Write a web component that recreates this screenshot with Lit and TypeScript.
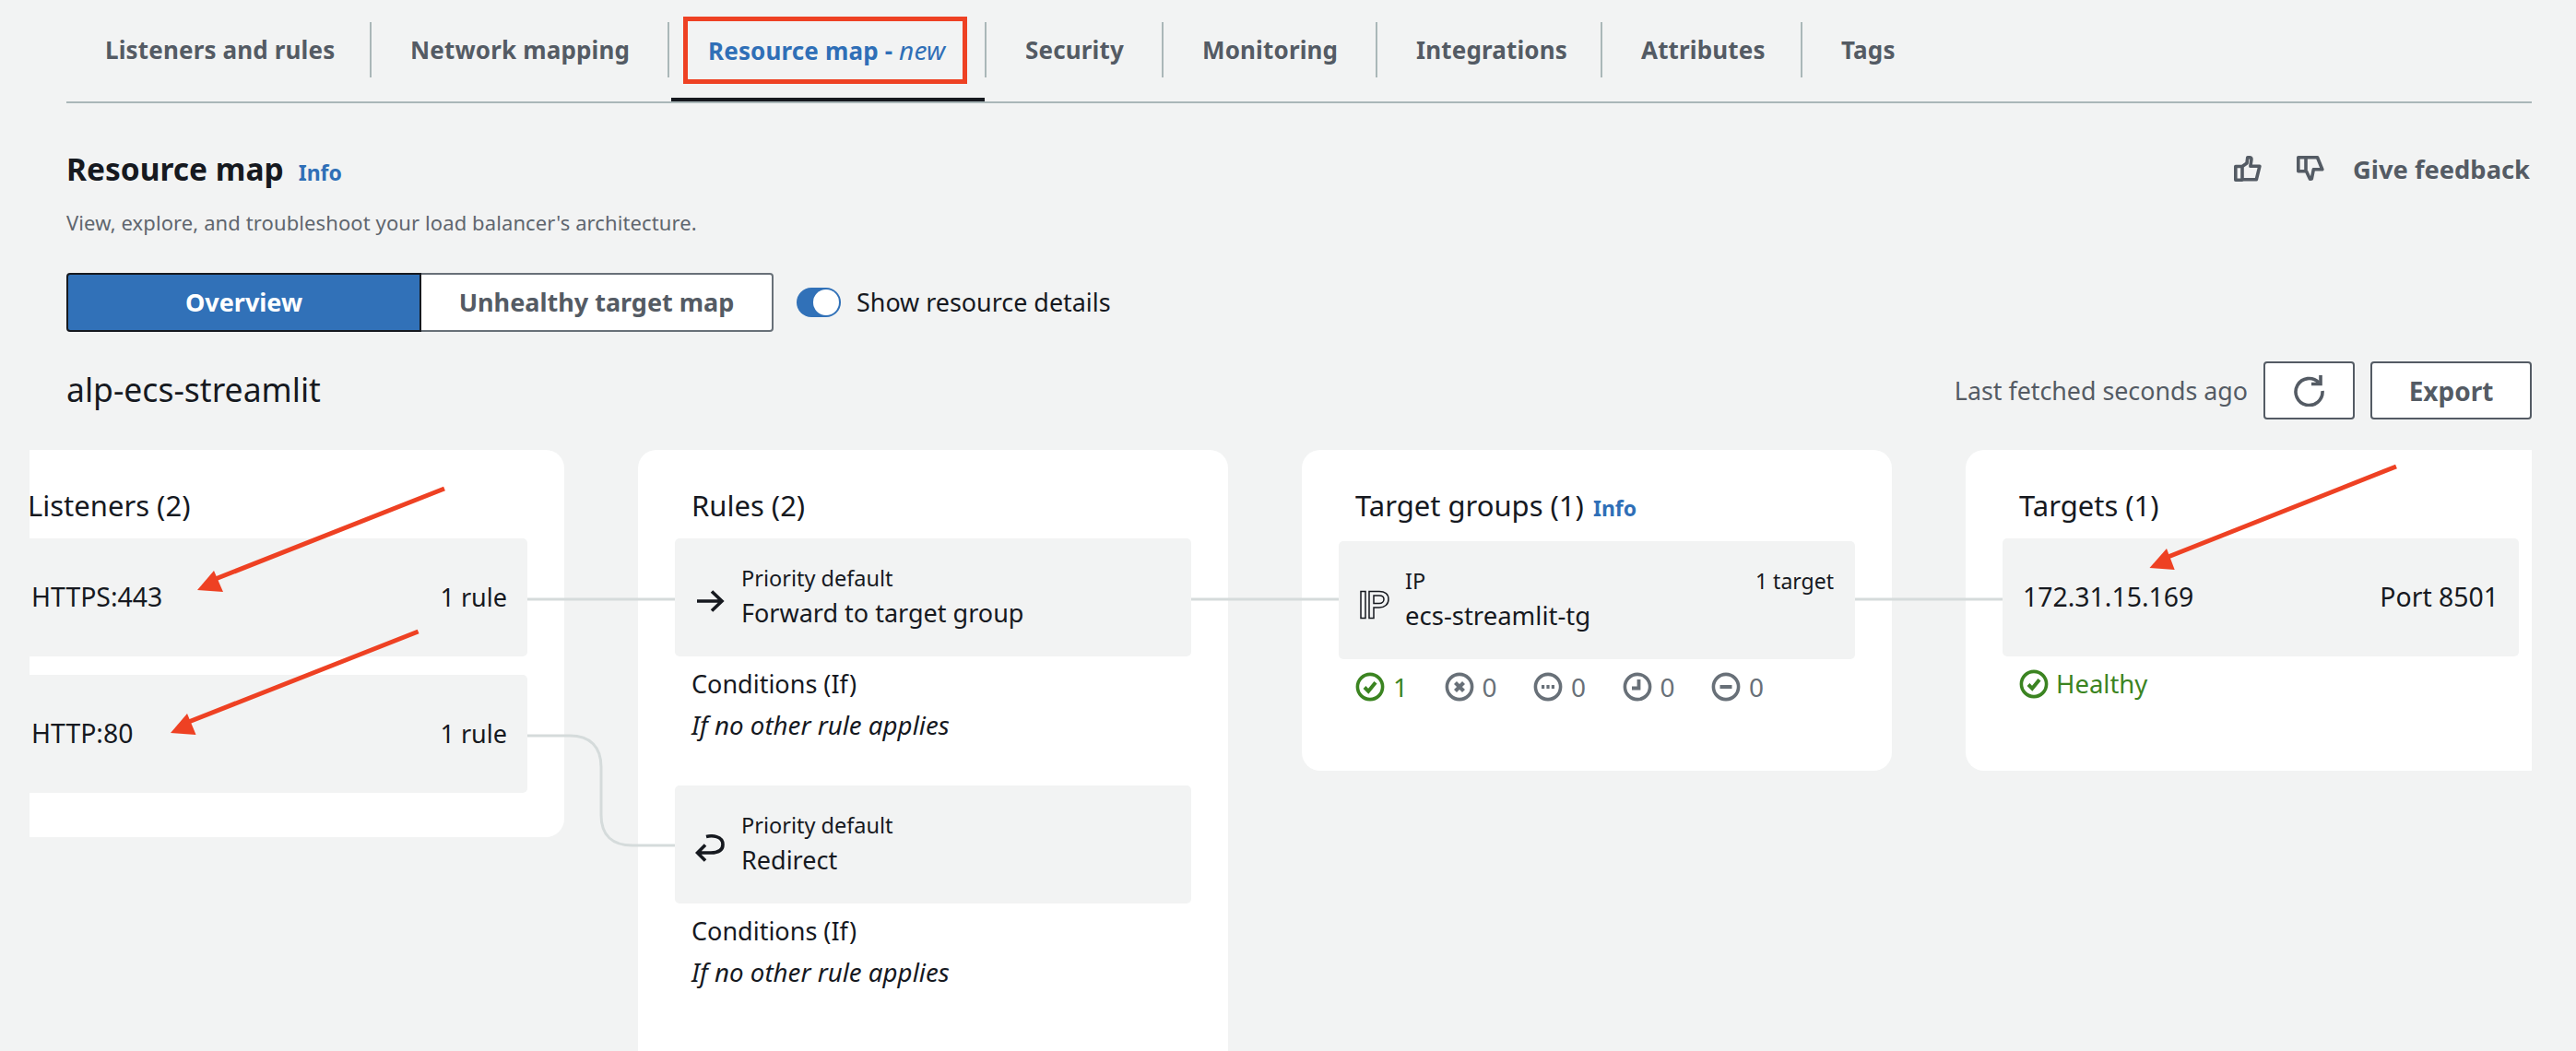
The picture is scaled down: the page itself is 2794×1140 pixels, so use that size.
import { LitElement, html, css, svg } from "lit";
import { customElement } from "lit/decorators.js";

const tabs: [string, number][] = [
  ["Listeners and rules", 329], ["Network mapping", 323], ["Resource map", 344], ["Security", 192],
  ["Monitoring", 232], ["Integrations", 244], ["Attributes", 217], ["Tags", 140],
];

const ring = svg`<circle cx="16" cy="16" r="13.6" fill="none" stroke="currentColor" stroke-width="3.6"/>`;
const ok = svg`${ring}<path d="M10 16.500l4.200 4.300 7.800-9.600" fill="none" stroke="currentColor" stroke-width="4"/>`;
const statusIcons = [
  ok,
  svg`${ring}<path d="M11.500 11.500l9 9M20.500 11.500l-9 9" fill="none" stroke="currentColor" stroke-width="4.200"/>`,
  svg`${ring}<path d="M9 16h3.200M14.400 16h3.200M19.800 16h3.200" fill="none" stroke="currentColor" stroke-width="3.800"/>`,
  svg`${ring}<path d="M17.500 8v9.500H10" fill="none" stroke="currentColor" stroke-width="3.800"/>`,
  svg`${ring}<path d="M9.500 16h13" fill="none" stroke="currentColor" stroke-width="4"/>`,
];

@customElement("app-root")
export class AppRoot extends LitElement {
  static styles = css`
    :host { display: block; width: 2794px; height: 1140px; overflow: hidden; background: #f2f3f3; color: #16191f; font-family: "Noto Sans", Roboto, sans-serif; font-size: 27px; }
    .page { padding: 24px 48px 0 72px; }
    .tabs { display: flex; border-bottom: 2px solid #aab7b8; height: 86px; }
    .tab { position: relative; height: 60px; line-height: 60px; box-sizing: border-box; padding-left: 42px; font-weight: 700; font-size: 26px; letter-spacing: .15px; color: #545b64; border-left: 2px solid #aab7b8; white-space: nowrap; }
    .tab:first-child { border-left: 0; }
    .tab.active { color: #2f6fb7; }
    .tab em { font-weight: 400; font-size: 28px; }
    .tab.active::after { content: ""; position: absolute; left: 2px; right: 0; top: 82px; height: 4px; background: #16191f; }
    .redbox { position: absolute; left: 15px; top: -6px; width: 298px; height: 63px; border: 5px solid #ee4123; }
    .head { display: flex; justify-content: space-between; align-items: center; margin-top: 49px; height: 44px; }
    .h-left { display: flex; align-items: baseline; gap: 16px; }
    h1 { margin: 0; font-size: 33.500px; line-height: 44px; font-weight: 700; }
    .info { color: #2f6fb7; font-weight: 700; font-size: 23px; }
    .fb { display: flex; align-items: center; color: #545b64; font-weight: 700; font-size: 27.300px; margin-top: 0; padding-right: 2px; }
    .fb svg { display: block; }
    .fb .dn { margin-left: 38px; }
    .fb span { margin-left: 31px; }
    .desc { margin-top: 20px; line-height: 32px; font-size: 22px; letter-spacing: .1px; color: #5f666e; }
    .segrow { display: flex; align-items: center; margin-top: 39px; height: 64px; }
    .seg { height: 64px; box-sizing: border-box; display: flex; align-items: center; justify-content: center; font-weight: 700; font-size: 27px; padding-bottom: 2px; }
    .seg.on { width: 385px; background: #3171b8; color: #fff; border: 2px solid #16191f; border-radius: 4px 0 0 4px; }
    .seg.off { width: 382px; background: #fff; color: #545b64; border: 2px solid #687078; border-left: 0; border-radius: 0 4px 4px 0; }
    .toggle { position: relative; width: 48px; height: 32px; border-radius: 16px; background: #3171b8; margin-left: 25px; }
    .toggle i { position: absolute; right: 2px; top: 2px; width: 28px; height: 28px; border-radius: 50%; background: #fff; }
    .tlabel { margin-left: 17px; font-size: 26.900px; margin-top: -2px; }
    .titlerow { display: flex; justify-content: space-between; align-items: center; margin-top: 32px; height: 63px; }
    .title { font-size: 35.500px; margin-top: -3px; }
    .tr { display: flex; align-items: center; }
    .fetched { color: #545b64; font-size: 26.800px; margin-right: 17px; }
    .btn { height: 63px; box-sizing: border-box; display: flex; align-items: center; justify-content: center; background: #fff; border: 2px solid #545b64; border-radius: 4px; color: #545b64; font-weight: 700; font-size: 28px; }
    .btn.r { width: 99px; margin-right: 17px; }
    .btn.e { width: 175px; }
    .canvas { position: relative; margin: 33px 0 0 -44px; height: 652px; overflow: hidden; }
    .cards { display: flex; gap: 80px; padding-left: 4px; align-items: flex-start; }
    .card { flex: none; width: 640px; box-sizing: border-box; padding: 40px 40px 0; background: #fff; border-radius: 20px; }
    .card.l { width: 580px; height: 420px; padding-left: 0; border-radius: 0 20px 20px 0; }
    .card.l h2 { margin-left: -2px; }
    .card.l .row { border-radius: 0 5px 5px 0; padding-left: 2px; }
    .card.m { height: 720px; }
    .card.s { height: 348px; }
    .card.t { width: 614px; padding-right: 14px; border-radius: 20px 0 0 20px; }
    h2 { margin: 0 0 16px 18px; font-size: 31px; line-height: 40px; font-weight: 400; white-space: nowrap; }
    h2 .info { margin-left: 2px; }
    .row { height: 128px; box-sizing: border-box; background: #f2f3f3; border-radius: 5px; }
    .row.flat { display: flex; justify-content: space-between; align-items: center; padding: 0 22px 2px 22px; font-size: 28.400px; }
    .row.flat .sm { font-size: 27px; }
    .card.l .row + .row { margin-top: 20px; }
    .row.rich { display: flex; padding: 25px 23px 0 22px; }
    .ic { width: 50px; flex: none; padding-top: 28px; }
    .ic svg { display: block; }
    .lines { flex: 1; }
    .small { font-size: 23.500px; line-height: 36px; display: flex; justify-content: space-between; }
    .small .tgt { font-size: 23px; }
    .big { font-size: 27px; line-height: 40px; }
    .big.tg { font-size: 27.500px; }
    .cond { margin: 8px 0 43px 18px; font-size: 27px; line-height: 44px; }
    .cond em { display: block; line-height: 45px; font-size: 27.700px; }
    .status { display: grid; grid-template-columns: repeat(5, 96.500px); margin: 14px 0 0 18px; height: 32px; }
    .st { display: flex; align-items: center; gap: 9px; color: #687078; font-size: 28px; line-height: 32px; }
    .st.g { color: #3b8421; }
    .st.wide { grid-column: span 3; font-size: 27.500px; gap: 8px; }
    .st svg { flex: none; display: block; }
    .over { position: absolute; left: 0; top: 0; pointer-events: none; }
  `;

  render() {
    return html`<div class="page">
      <div class="tabs">
        ${tabs.map(([t, w], i) => i === 2
          ? html`<div class="tab active" style="width:${w}px">Resource map - <em>new</em><div class="redbox"></div></div>`
          : html`<div class="tab" style="width:${w}px">${t}</div>`)}
      </div>
      <div class="head">
        <div class="h-left"><h1>Resource map</h1><span class="info">Info</span></div>
        <div class="fb">
          <svg width="30" height="28" viewBox="0 0 30 28" fill="none" stroke="currentColor" stroke-width="3.600" stroke-linejoin="round"><path d="M1.800 11.500h7.200v14.700H1.800zM9 11.500l5-3.500.8-6.200h2.700c1.200 0 1.700 1 1.400 2.700l-1 6.800h10l-3.600 14.400H9"/></svg>
          <svg class="dn" width="30" height="28" viewBox="0 0 30 28" fill="none" stroke="currentColor" stroke-width="3.600" stroke-linejoin="round"><path d="M1.800 1.800h8.200v15H1.800zM10 1.800h12.500l5.300 13h-9.500l-2 10.200-1.800.3-4-8.500"/></svg>
          <span>Give feedback</span>
        </div>
      </div>
      <div class="desc">View, explore, and troubleshoot your load balancer's architecture.</div>
      <div class="segrow">
        <div class="seg on">Overview</div><div class="seg off">Unhealthy target map</div>
        <div class="toggle"><i></i></div><div class="tlabel">Show resource details</div>
      </div>
      <div class="titlerow">
        <div class="title">alp-ecs-streamlit</div>
        <div class="tr">
          <span class="fetched">Last fetched seconds ago</span>
          <div class="btn r"><svg width="34" height="34" viewBox="0 0 34 34" fill="none" stroke="currentColor" stroke-width="3.600"><path d="M27 8A14.500 14.500 0 1 0 31 17"/><path d="M19 9.500h10V0"/></svg></div>
          <div class="btn e">Export</div>
        </div>
      </div>
      <div class="canvas">
        <div class="cards">
          <div class="card l">
            <h2>Listeners (2)</h2>
            <div class="row flat"><span>HTTPS:443</span><span class="sm">1 rule</span></div>
            <div class="row flat"><span>HTTP:80</span><span class="sm">1 rule</span></div>
          </div>
          <div class="card m">
            <h2>Rules (2)</h2>
            <div class="row rich">
              <div class="ic"><svg width="32" height="32" viewBox="0 0 32 32" fill="none" stroke="#16191f" stroke-width="3.600"><path d="M2 15h27M18 4.500l11 10.500-11 10.500"/></svg></div>
              <div class="lines"><div class="small">Priority default</div><div class="big">Forward to target group</div></div>
            </div>
            <div class="cond">Conditions (If)<em>If no other rule applies</em></div>
            <div class="row rich">
              <div class="ic"><svg width="32" height="32" viewBox="0 0 32 32" fill="none" stroke="#16191f" stroke-width="3.600"><path d="M12 2.500c6-1.500 18-1 18 8.500 0 8-7 9-13 9H3M11 11.500l-8.500 8.500 8.500 8.500"/></svg></div>
              <div class="lines"><div class="small">Priority default</div><div class="big">Redirect</div></div>
            </div>
            <div class="cond">Conditions (If)<em>If no other rule applies</em></div>
          </div>
          <div class="card s">
            <h2>Target groups (1) <span class="info">Info</span></h2>
            <div class="row rich">
              <div class="ic"><svg width="34" height="32" viewBox="0 0 34 32" fill="none" stroke="#16191f" stroke-width="1.500"><path d="M2 1.500h5v29H2zM11 1.500h11c6 0 10 3 10 8.500s-4 9-10 9h-6v11.500h-5zM16 6h6c3 0 5 1.500 5 4s-2 4.500-5 4.500h-6z"/></svg></div>
              <div class="lines"><div class="small"><span>IP</span><span class="tgt">1 target</span></div><div class="big tg">ecs-streamlit-tg</div></div>
            </div>
            <div class="status">
              ${statusIcons.map((p, i) => html`<div class="st ${i === 0 ? "g" : ""}"><svg width="32" height="32" viewBox="0 0 32 32">${p}</svg>${i === 0 ? "1" : "0"}</div>`)}
            </div>
          </div>
          <div class="card s t">
            <h2>Targets (1)</h2>
            <div class="row flat"><span>172.31.15.169</span><span>Port 8501</span></div>
            <div class="status"><div class="st g wide"><svg width="32" height="32" viewBox="0 0 32 32">${ok}</svg>Healthy</div></div>
          </div>
        </div>
        <svg class="over" width="2718" height="652" viewBox="28 488 2718 652" fill="none">
          <g stroke="#d5dbdb" stroke-width="3">
            <path d="M572 650H732M1292 650H1452M2012 650H2172"/>
            <path d="M572 798H618C640 798 652 810 652 832V884C652 906 664 917 686 917H732"/>
          </g>
          <g stroke="#ee4123" stroke-width="5">
            <path d="M482 530L226 631M453.600 685L197 786M2599 506L2344 607"/>
          </g>
          <g fill="#ee4123">
            <path d="M214 640L232 619L242 642Z"/>
            <path d="M185 795L203 774L212.600 797Z"/>
            <path d="M2331.500 616L2350 595L2358.700 618Z"/>
          </g>
        </svg>
      </div>
    </div>`;
  }
}
